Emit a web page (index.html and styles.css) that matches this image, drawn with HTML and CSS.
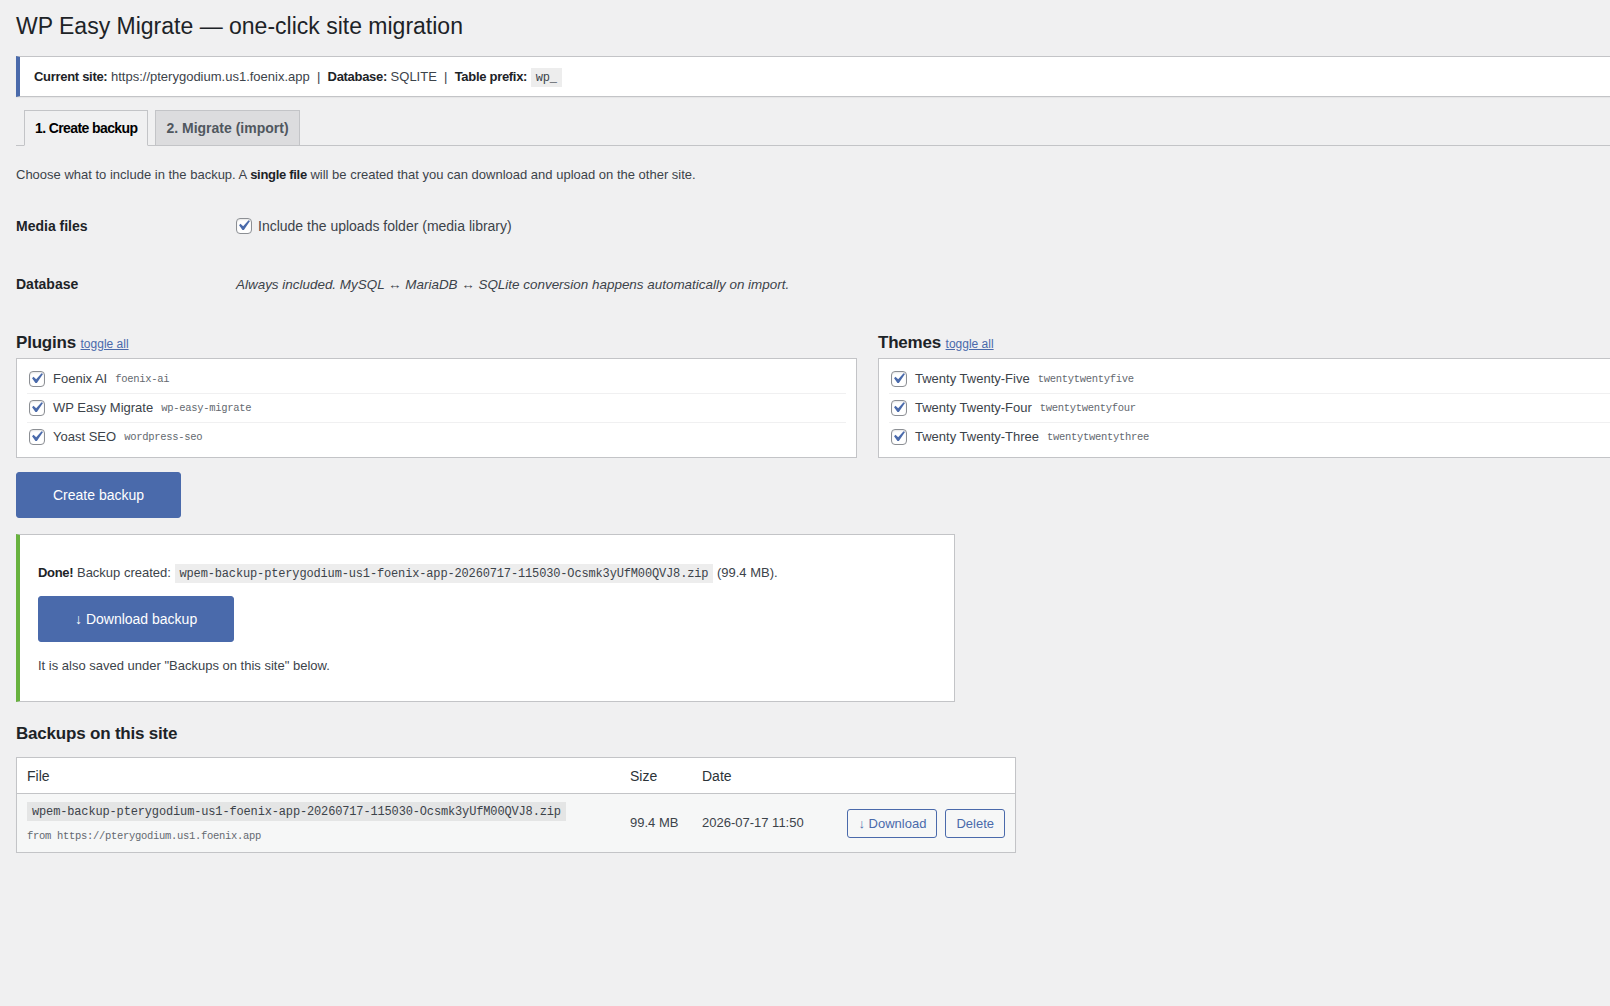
FILE: index.html
```html
<!DOCTYPE html>
<html lang="en">
<head>
    <meta charset="UTF-8">
    <title>WP Easy Migrate</title>
    <link rel="stylesheet" href="styles.css">
</head>
<body>
    <div class="wrap">
        <h1>WP Easy Migrate — one-click site migration</h1>

        <!-- site info -->
        <div class="notice notice-info">
            <p><strong>Current site:</strong> https://pterygodium.us1.foenix.app &nbsp;|&nbsp; <strong>Database:</strong> SQLITE &nbsp;|&nbsp; <strong>Table prefix:</strong> <code>wp_</code></p>
        </div>

        <nav class="nav-tab-wrapper">
            <a class="nav-tab nav-tab-active">1. Create backup</a>
            <a class="nav-tab">2. Migrate (import)</a>
        </nav>

        <p class="intro">Choose what to include in the backup. A <strong>single file</strong> will be created that you can download and upload on the other site.</p>

        <table class="form-table">
            <tr>
                <th>Media files</th>
                <td>
                    <label class="check-label">
                        <span class="cb"><svg viewBox="0 0 20 20" width="21" height="21"><path d="M14.83 4.89l1.34.94-5.81 8.38H9.02L5.78 9.67l1.34-1.25 2.57 2.4z"/></svg></span>
                        Include the uploads folder (media library)
                    </label>
                </td>
            </tr>
            <tr>
                <th>Database</th>
                <td><em>Always included. MySQL ↔ MariaDB ↔ SQLite conversion happens automatically on import.</em></td>
            </tr>
        </table>

        <div class="columns">
            <div class="col">
                <h3>Plugins <a class="toggle">toggle all</a></h3>
                <div class="checklist">
                    <label><span class="cb"><svg viewBox="0 0 20 20" width="21" height="21"><path d="M14.83 4.89l1.34.94-5.81 8.38H9.02L5.78 9.67l1.34-1.25 2.57 2.4z"/></svg></span>Foenix AI <code>foenix-ai</code></label>
                    <label><span class="cb"><svg viewBox="0 0 20 20" width="21" height="21"><path d="M14.83 4.89l1.34.94-5.81 8.38H9.02L5.78 9.67l1.34-1.25 2.57 2.4z"/></svg></span>WP Easy Migrate <code>wp-easy-migrate</code></label>
                    <label><span class="cb"><svg viewBox="0 0 20 20" width="21" height="21"><path d="M14.83 4.89l1.34.94-5.81 8.38H9.02L5.78 9.67l1.34-1.25 2.57 2.4z"/></svg></span>Yoast SEO <code>wordpress-seo</code></label>
                </div>
            </div>
            <div class="col">
                <h3>Themes <a class="toggle">toggle all</a></h3>
                <div class="checklist">
                    <label><span class="cb"><svg viewBox="0 0 20 20" width="21" height="21"><path d="M14.83 4.89l1.34.94-5.81 8.38H9.02L5.78 9.67l1.34-1.25 2.57 2.4z"/></svg></span>Twenty Twenty-Five <code>twentytwentyfive</code></label>
                    <label><span class="cb"><svg viewBox="0 0 20 20" width="21" height="21"><path d="M14.83 4.89l1.34.94-5.81 8.38H9.02L5.78 9.67l1.34-1.25 2.57 2.4z"/></svg></span>Twenty Twenty-Four <code>twentytwentyfour</code></label>
                    <label><span class="cb"><svg viewBox="0 0 20 20" width="21" height="21"><path d="M14.83 4.89l1.34.94-5.81 8.38H9.02L5.78 9.67l1.34-1.25 2.57 2.4z"/></svg></span>Twenty Twenty-Three <code>twentytwentythree</code></label>
                </div>
            </div>
        </div>

        <button class="button button-primary button-hero">Create backup</button>

        <!-- result -->
        <div class="done-box">
            <p><strong>Done!</strong> Backup created: <code>wpem-backup-pterygodium-us1-foenix-app-20260717-115030-Ocsmk3yUfM00QVJ8.zip</code> (99.4 MB).</p>
            <a class="button button-primary button-hero">↓ Download backup</a>
            <p class="saved">It is also saved under "Backups on this site" below.</p>
        </div>

        <h2>Backups on this site</h2>
        <table class="widefat">
            <thead>
                <tr>
                    <td class="col-file">File</td>
                    <td class="col-size">Size</td>
                    <td class="col-date">Date</td>
                    <td class="col-actions"></td>
                </tr>
            </thead>
            <tbody>
                <tr>
                    <td>
                        <code>wpem-backup-pterygodium-us1-foenix-app-20260717-115030-Ocsmk3yUfM00QVJ8.zip</code>
                        <div class="from">from https://pterygodium.us1.foenix.app</div>
                    </td>
                    <td>99.4 MB</td>
                    <td>2026-07-17 11:50</td>
                    <td>
                        <div class="actions">
                            <a class="button">↓ Download</a>
                            <a class="button">Delete</a>
                        </div>
                    </td>
                </tr>
            </tbody>
        </table>
    </div>
</body>
</html>
```

FILE: styles.css
```css
* { box-sizing: border-box; }
html { overflow-x: hidden; }
body {
    margin: 0; background: #f0f0f1; color: #3c434a;
    font-family: "Liberation Sans", Arial, sans-serif; font-size: 13px; line-height: 1.4;
}
.wrap { width: 1735px; padding: 0 16px; }
h1 {
    margin: 0; padding: 11px 0 0; font-size: 23px; line-height: 30px;
    font-weight: 400; color: #1d2327;
}
strong { font-weight: 600; color: #1d2327; letter-spacing: -0.3px; }
code {
    font-family: "Liberation Mono", monospace; font-size: 12px; letter-spacing: -0.15px;
    background: rgba(0,0,0,0.07); padding: 3px 5px 2px; color: #3c434a;
}

/* notices */
.notice {
    margin-top: 15px; background: #fff; border: 1px solid #c3c4c7;
    border-left: 4px solid #4a6aab; padding: 1px 12px;
    box-shadow: 0 1px 1px rgba(0,0,0,0.04);
}
.notice p { margin: 6.5px 0; padding: 2px; line-height: 1.5; color: #3c434a; }

/* tabs */
.nav-tab-wrapper {
    display: flex; margin-top: 13px; padding-left: 1px;
    border-bottom: 1px solid #c3c4c7;
}
.nav-tab {
    margin: 0 0 -1px 7px; padding: 5px 10px; border: 1px solid #c3c4c7;
    background: #dcdcde; color: #50575e; font-size: 14px;
    line-height: 24px; font-weight: 600; text-decoration: none;
}
.nav-tab-active {
    background: #f0f0f1; border-bottom-color: #f0f0f1; color: #000; letter-spacing: -0.6px;
}

.intro { margin: 19px 0 12px; line-height: 1.5; }

/* form table */
.form-table { border-collapse: collapse; font-size: 14px; }
.form-table th {
    width: 210px; padding: 20px 10px 20px 0; text-align: left; vertical-align: top;
    line-height: 1.3; font-weight: 600; color: #1d2327;
}
.form-table td { padding: 15px 10px; line-height: 1.3; vertical-align: middle; }
.form-table em { color: #3c434a; font-size: 13.45px; }

.check-label { display: flex; align-items: center; gap: 6px; color: #3c434a; }
.cb {
    position: relative; flex: none; width: 16px; height: 16px;
    border: 1px solid #8c8f94; border-radius: 4px; background: #fff;
    box-shadow: inset 0 1px 2px rgba(0,0,0,0.1);
}
.cb svg { position: absolute; left: -4px; top: -4px; fill: #4a6aab; }

/* plugins / themes */
.columns { display: grid; grid-template-columns: 1fr 1fr; gap: 21px; margin-top: 18px; }
.columns h3 {
    margin: 0 0 2px; font-size: 17px; line-height: 24px; font-weight: 600;
    color: #1d2327; letter-spacing: -0.2px;
}
.toggle {
    font-size: 12px; font-weight: 400; color: #4a6aab; text-decoration: underline;
    letter-spacing: 0;
}
.checklist {
    background: #fff; border: 1px solid #c3c4c7; padding: 6px 10px;
}
.checklist label {
    display: flex; align-items: center; height: 29px; padding-left: 2px;
    border-bottom: 1px solid #f0f0f1; color: #3c434a;
}
.checklist label:last-child { border-bottom: none; height: 28px; }
.checklist .cb { margin-right: 8px; }
.checklist code {
    background: none; padding: 0; margin-left: 8px; font-size: 10.5px;
    letter-spacing: -0.3px; color: #646970;
}

/* buttons */
.button {
    display: inline-block; border: 1px solid #4a6aab; border-radius: 3px;
    background: #f6f7f7; color: #4a6aab; font-family: inherit; font-size: 13px;
    line-height: 27px; padding: 0 10px; text-decoration: none; cursor: pointer;
    white-space: nowrap;
}
.button-primary { background: #4a6aab; color: #fff; }
.button-hero { font-size: 14px; line-height: 44px; padding: 0 36px; }
.columns + .button { margin-top: 14px; }

/* done notice */
.done-box {
    width: 939px; margin-top: 16px; background: #fff; border: 1px solid #c3c4c7;
    border-left: 4px solid #68b23f; padding: 28px 18px 25px;
}
.done-box p { margin: 0; line-height: 19.5px; }
.done-box .button { margin: 12px 0 14px; }

h2 {
    margin: 20px 0 11px; font-size: 17px; line-height: 24px; font-weight: 600;
    color: #1d2327; letter-spacing: -0.2px;
}

/* backups table */
.widefat {
    width: 1000px; table-layout: fixed; border: 1px solid #c3c4c7; border-spacing: 0;
    background: #fff; box-shadow: 0 1px 1px rgba(0,0,0,0.04);
}
.widefat thead td {
    padding: 9px 10px 7px; border-bottom: 1px solid #c3c4c7; font-size: 14px;
    line-height: 19.6px; color: #2c3338;
}
.widefat tbody td { padding: 8px 10px; background: #f6f7f7; vertical-align: middle; }
.col-size { width: 72px; }
.col-date { width: 150px; }
.col-actions { width: 173px; }
.from {
    margin-top: 8px; font-family: "Liberation Mono", monospace; font-size: 10.5px;
    letter-spacing: -0.3px; color: #646970;
}
.actions { display: flex; justify-content: flex-end; gap: 8px; }
.actions .button { background: transparent; }
```
